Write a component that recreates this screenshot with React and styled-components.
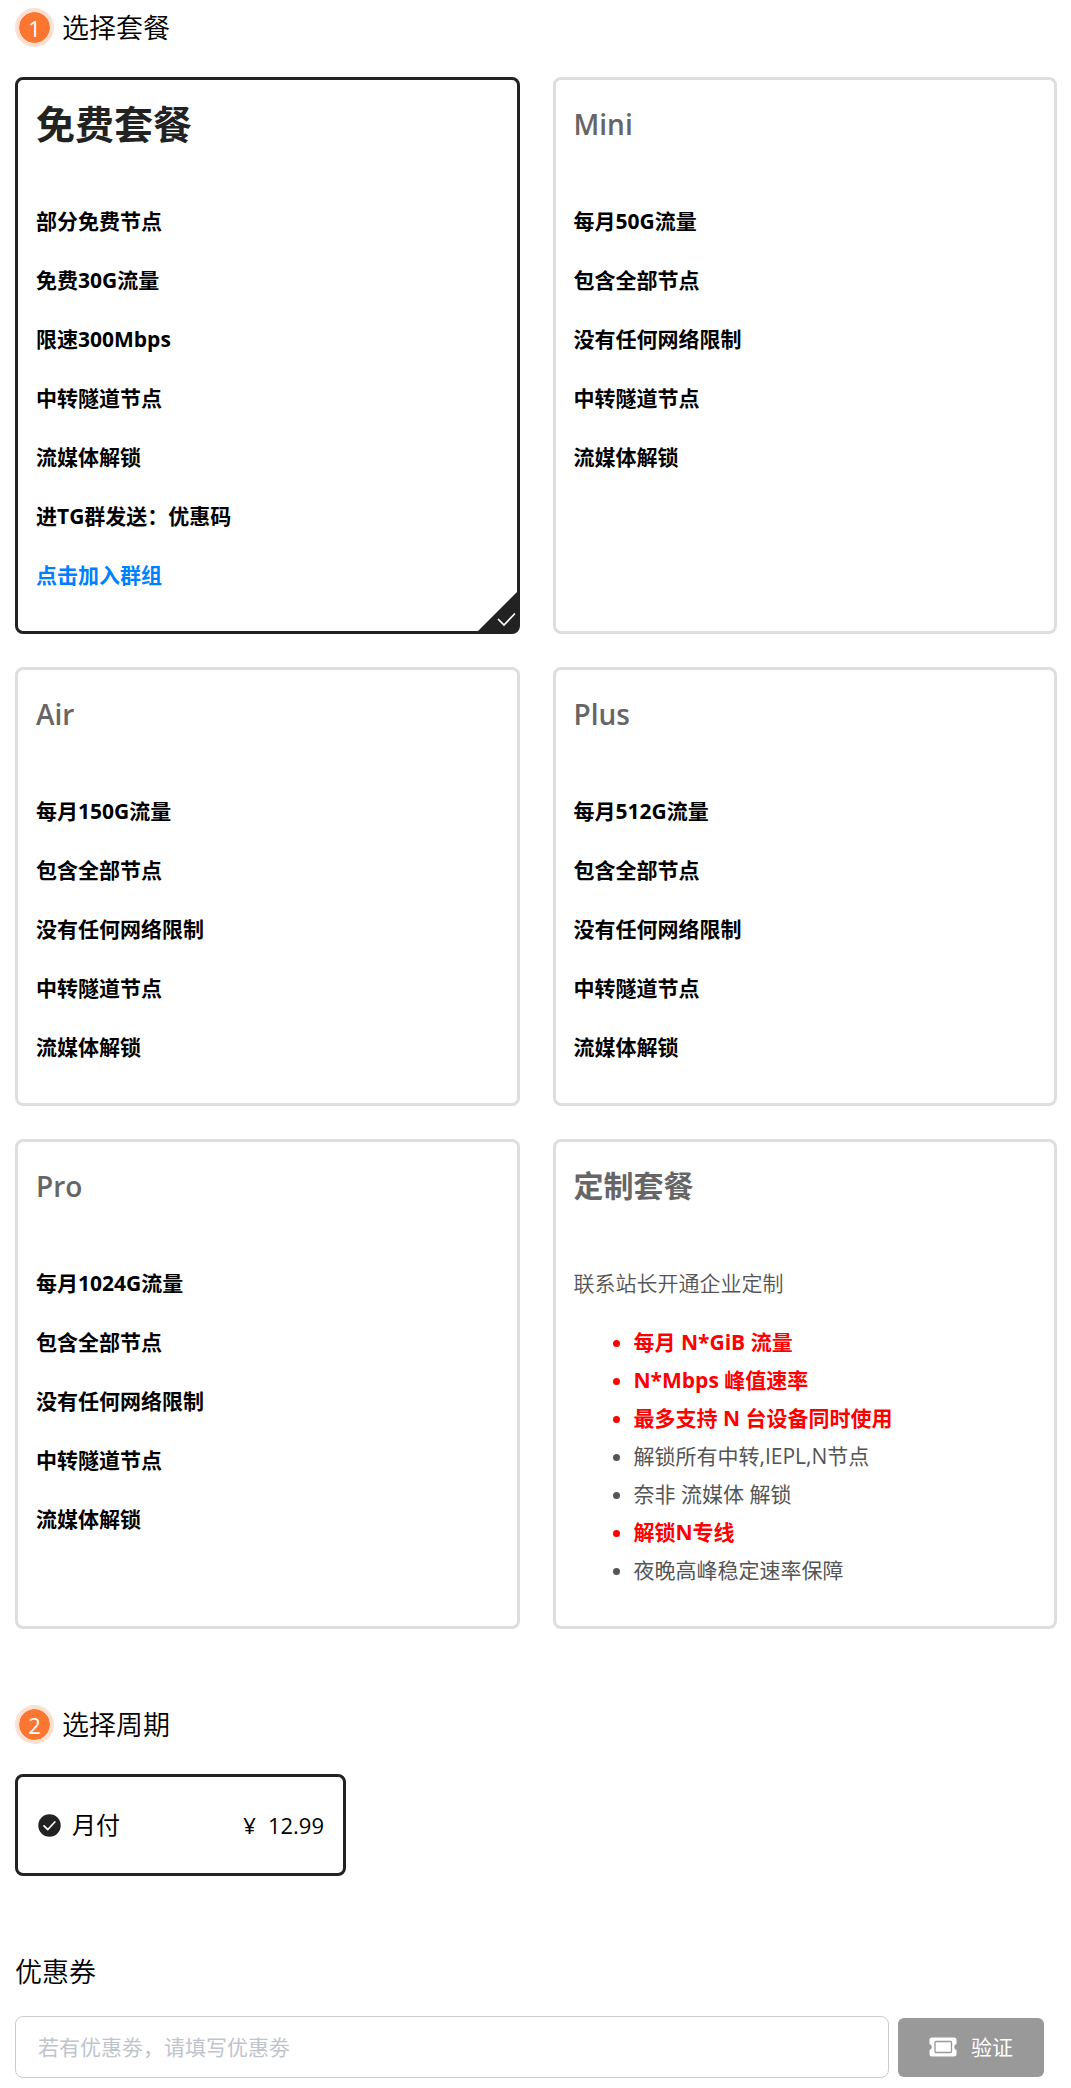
import React from "react";
import styled, { createGlobalStyle, css } from "styled-components";

const GlobalStyle = createGlobalStyle`
  *, *::before, *::after { box-sizing: border-box; }
  body {
    margin: 0;
    background: #fff;
    color: #000;
    font-family: "Open Sans", "Noto Sans CJK SC", sans-serif;
    font-size: 21px;
    line-height: 38px;
  }
`;

const Page = styled.main`
  display: flex;
  flex-direction: column;
  gap: 76px;
  padding: 8px 14px 10px 15px;
`;

const Section = styled.section`
  display: flex;
  flex-direction: column;
  gap: ${(p) => p.$gap}px;
`;

const Heading = styled.h2`
  display: flex;
  align-items: center;
  gap: 8px;
  margin: 0;
  font-size: 27px;
  font-weight: 350;
  line-height: 39px;
`;

const StepBadge = styled.span`
  display: flex;
  align-items: center;
  justify-content: center;
  width: 39px;
  height: 39px;
  border: 4px solid #fee0d2;
  border-radius: 50%;
  background: #fa7631;
  background-clip: padding-box;
  color: #fff;
  font-size: 22px;
  font-weight: 400;
  line-height: 30px;
`;

const PlanGrid = styled.div`
  display: grid;
  grid-template-columns: 1fr 1fr;
  gap: 33px;
`;

const PlanCard = styled.article`
  position: relative;
  padding: 15px 18px 16px;
  border: 3px solid ${(p) => (p.$selected ? "#222" : "#dedede")};
  border-radius: 8px;
`;

const titleStyles = {
  featured: css`
    color: #222;
    font-size: 39px;
    font-weight: 700;
  `,
  custom: css`
    color: #666;
    font-size: 30px;
    font-weight: 700;
  `,
  latin: css`
    color: #666;
    font-size: 28px;
    font-weight: 600;
  `,
};

const PlanTitle = styled.h3`
  margin: 0 0 49px;
  line-height: 58px;
  ${(p) => titleStyles[p.$kind]}
`;

const Feature = styled.p`
  margin: 0 0 21px;
  ${(p) =>
    p.$plain
      ? css`
          color: #555;
          font-weight: 350;
        `
      : css`
          color: #000;
          font-weight: 700;
        `}
`;

const GroupLink = styled.a`
  color: #0080ff;
  text-decoration: none;
`;

const BulletList = styled.ul`
  margin: 0 0 21px;
  padding-left: 60px;
`;

const Bullet = styled.li`
  color: ${(p) => (p.$strong ? "#f00" : "#555")};
  font-weight: ${(p) => (p.$strong ? 700 : 400)};
`;

const Corner = styled.svg`
  position: absolute;
  right: 0;
  bottom: 0;
  width: 39px;
  height: 39px;
  overflow: visible;
`;

const PeriodCard = styled.label`
  display: flex;
  align-items: center;
  width: 331px;
  max-width: 100%;
  height: 102px;
  padding: 0 19px 0 20px;
  border: 3px solid #222;
  border-radius: 8px;
  font-size: 24px;
`;

const Radio = styled.input`
  position: absolute;
  width: 1px;
  height: 1px;
  margin: 0;
  opacity: 0;
`;

const RadioMark = styled.svg`
  flex: none;
  width: 23px;
  height: 23px;
  margin-right: 11px;
`;

const Price = styled.span`
  display: flex;
  gap: 12px;
  margin-left: auto;
  font-size: 22px;
`;

const CouponRow = styled.form`
  display: flex;
  align-items: center;
  gap: 9px;
  padding-right: 13px;
`;

const CouponInput = styled.input`
  flex: 1;
  min-width: 0;
  height: 62px;
  padding: 0 22px;
  border: 1px solid #ccc;
  border-radius: 8px;
  background: #fff;
  color: #222;
  font: inherit;
  outline: none;

  &::placeholder {
    color: #c0c4cc;
    opacity: 1;
  }
`;

const VerifyButton = styled.button`
  display: flex;
  align-items: center;
  justify-content: center;
  gap: 14px;
  width: 146px;
  height: 59px;
  padding: 0;
  border: 0;
  border-radius: 6px;
  background: #999;
  color: #fff;
  font: inherit;
`;

const TicketIcon = styled.svg`
  width: 28px;
  height: 20px;
`;

const plans = [
  {
    title: "免费套餐",
    kind: "featured",
    selected: true,
    features: ["部分免费节点", "免费30G流量", "限速300Mbps", "中转隧道节点", "流媒体解锁", "进TG群发送：优惠码"],
    link: "点击加入群组",
  },
  { title: "Mini", kind: "latin", features: ["每月50G流量", "包含全部节点", "没有任何网络限制", "中转隧道节点", "流媒体解锁"] },
  { title: "Air", kind: "latin", features: ["每月150G流量", "包含全部节点", "没有任何网络限制", "中转隧道节点", "流媒体解锁"] },
  { title: "Plus", kind: "latin", features: ["每月512G流量", "包含全部节点", "没有任何网络限制", "中转隧道节点", "流媒体解锁"] },
  { title: "Pro", kind: "latin", features: ["每月1024G流量", "包含全部节点", "没有任何网络限制", "中转隧道节点", "流媒体解锁"] },
  {
    title: "定制套餐",
    kind: "custom",
    plain: true,
    features: ["联系站长开通企业定制"],
    bullets: [
      ["每月 N*GiB 流量", true],
      ["N*Mbps 峰值速率", true],
      ["最多支持 N 台设备同时使用", true],
      ["解锁所有中转,IEPL,N节点", false],
      ["奈非 流媒体 解锁", false],
      ["解锁N专线", true],
      ["夜晚高峰稳定速率保障", false],
    ],
  },
];

function Plan({ plan }) {
  return (
    <PlanCard $selected={plan.selected}>
      <PlanTitle $kind={plan.kind}>{plan.title}</PlanTitle>
      {plan.features.map((text) => (
        <Feature key={text} $plain={plan.plain}>{text}</Feature>
      ))}
      {plan.link && (
        <Feature>
          <GroupLink href="#group">{plan.link}</GroupLink>
        </Feature>
      )}
      {plan.bullets && (
        <BulletList>
          {plan.bullets.map(([text, strong]) => (
            <Bullet key={text} $strong={strong}>{text}</Bullet>
          ))}
        </BulletList>
      )}
      {plan.selected && (
        <Corner viewBox="0 0 39 39" aria-hidden="true">
          <path d="M0 39 39 0H40V34Q40 40 34 40H0Z" fill="#222" />
          <path d="m20.5 27.5 5.5 5.5 10.5-11" fill="none" stroke="#fff" strokeWidth="1.7" strokeLinecap="round" />
        </Corner>
      )}
    </PlanCard>
  );
}

export default function App() {
  return (
    <>
      <GlobalStyle />
      <Page>
        <Section $gap={30}>
          <Heading><StepBadge>1</StepBadge>选择套餐</Heading>
          <PlanGrid>
            {plans.map((plan) => <Plan key={plan.title} plan={plan} />)}
          </PlanGrid>
        </Section>

        <Section $gap={30}>
          <Heading><StepBadge>2</StepBadge>选择周期</Heading>
          <PeriodCard>
            <Radio type="radio" name="period" value="month" defaultChecked />
            <RadioMark viewBox="0 0 23 23" aria-hidden="true">
              <circle cx="11.5" cy="11.5" r="11.2" fill="#222" />
              <path d="m6 11.8 3.8 3.8 7-7.6" fill="none" stroke="#fff" strokeWidth="1.7" strokeLinecap="round" />
            </RadioMark>
            月付
            <Price><span>¥</span><span>12.99</span></Price>
          </PeriodCard>
        </Section>

        <Section $gap={25}>
          <Heading as="label" htmlFor="coupon">优惠券</Heading>
          <CouponRow onSubmit={(e) => e.preventDefault()}>
            <CouponInput id="coupon" type="text" placeholder="若有优惠劵，请填写优惠劵" />
            <VerifyButton type="submit">
              <TicketIcon viewBox="0 0 28 20" aria-hidden="true">
                <path d="M3 0.5H25Q27.5 0.5 27.5 3V7Q25.2 7.6 25.2 10T27.5 13V17Q27.5 19.5 25 19.5H3Q0.5 19.5 0.5 17V13Q2.8 12.4 2.8 10T0.5 7V3Q0.5 0.5 3 0.5Z" fill="#fff" />
                <rect x="6" y="4.5" width="16.5" height="11" rx="1" fill="#fff" stroke="#999" strokeWidth="1.3" />
              </TicketIcon>
              验证
            </VerifyButton>
          </CouponRow>
        </Section>
      </Page>
    </>
  );
}
